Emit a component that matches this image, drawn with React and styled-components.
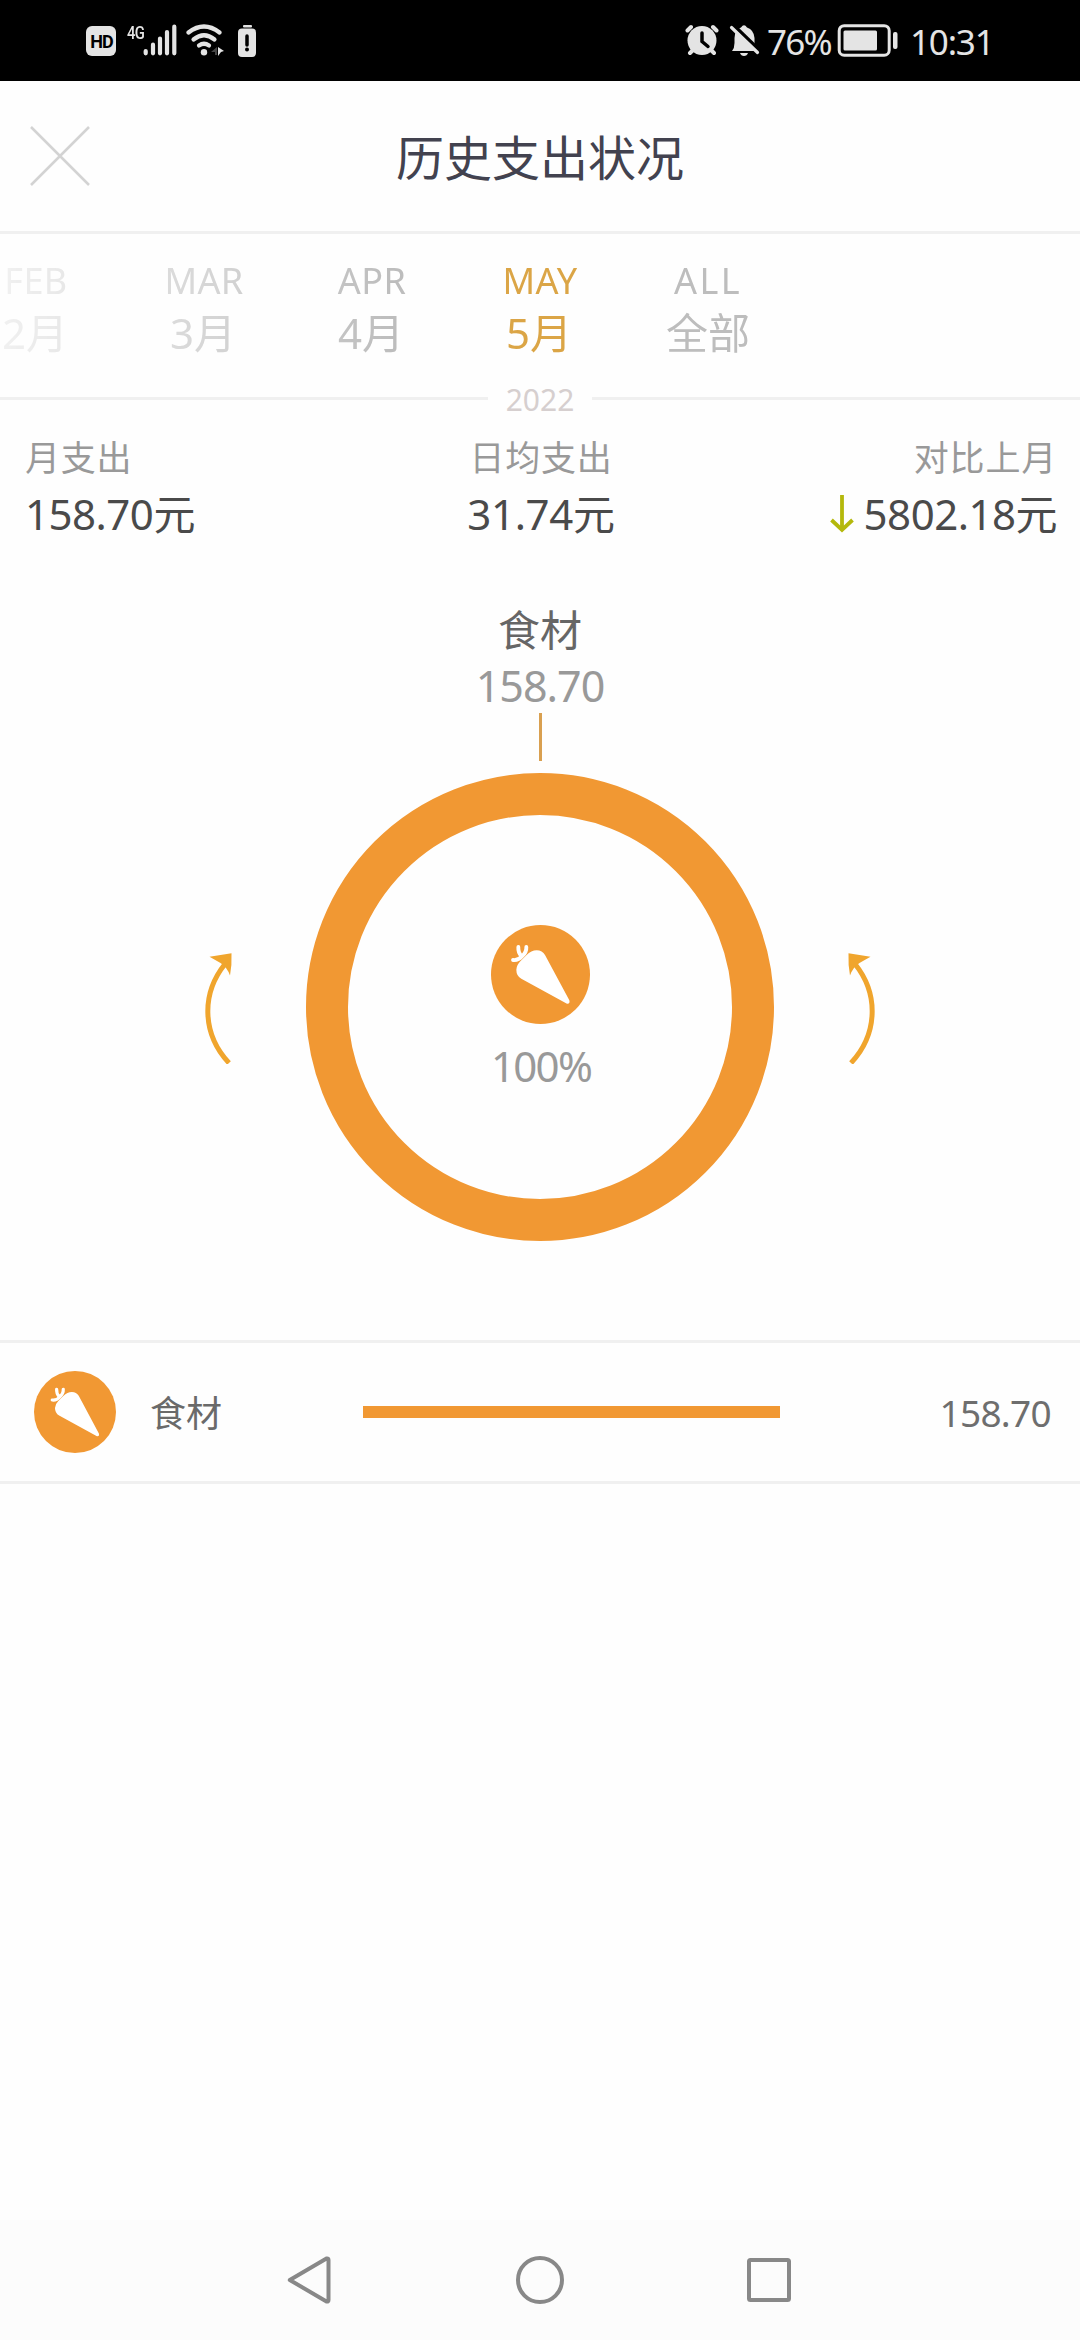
import React from "react";
import styled, { createGlobalStyle } from "styled-components";

const ORANGE = "#f19833";
const LINE = "#f0f0f0";

const GlobalStyle = createGlobalStyle`
  * { box-sizing: border-box; }
  body {
    margin: 0;
    background: #fefefe;
    font-family: "Noto Sans", "Noto Sans CJK SC", sans-serif;
  }
`;

const Screen = styled.div`
  display: flex;
  flex-direction: column;
  width: 1080px;
  height: 2340px;
  background: #fefefe;
  overflow: hidden;
`;

const Text = styled.span`
  display: block;
  height: ${(p) => p.$h}px;
  line-height: ${(p) => p.$h}px;
  font-size: ${(p) => p.$size}px;
  letter-spacing: ${(p) => p.$track || 0}px;
  color: ${(p) => p.$color};
  white-space: nowrap;
`;

/* ---------- status bar ---------- */

const StatusBar = styled.header`
  display: flex;
  justify-content: space-between;
  height: 81px;
  padding: 0 90px 0 86px;
  background: #000;
  color: #e4e4e4;
`;

const StatusGroup = styled.div`
  display: flex;
  align-items: flex-start;
  padding-top: 20px;
`;

const HdBadge = styled.span`
  width: 30px;
  height: 30px;
  margin-top: 6px;
  padding-left: 1px;
  border-radius: 6px;
  background: #e4e4e4;
  color: #000;
  font: 700 18px/32px "Roboto", sans-serif;
  letter-spacing: -1px;
  text-align: center;
`;

const Network = styled.span`
  width: 18px;
  margin: 3px 0 0 11px;
  font: 500 19px/19px "Roboto", sans-serif;
  letter-spacing: -1px;
  transform: scaleX(0.78);
  transform-origin: left;
`;

const StatusIcon = styled.svg`
  display: block;
  flex: none;
  margin-left: ${(p) => p.$gap || 0}px;
`;

const StatusText = styled.span`
  width: ${(p) => p.$w}px;
  margin-left: ${(p) => p.$gap}px;
  font-size: 35px;
  line-height: 43px;
  letter-spacing: ${(p) => p.$track}px;
  white-space: nowrap;
`;

/* ---------- title ---------- */

const TitleBar = styled.div`
  display: grid;
  grid-template-columns: 120px 1fr 120px;
  align-items: center;
  height: 153px;
  border-bottom: 3px solid ${LINE};
`;

const CloseButton = styled.button`
  display: flex;
  padding: 0 0 0 30px;
  border: 0;
  background: none;
`;

const Title = styled.h1`
  margin: 0;
  height: 70px;
  font-size: 48px;
  line-height: 73px;
  font-weight: 400;
  text-align: center;
  color: #42424f;
`;

/* ---------- month picker ---------- */

const Months = styled.nav`
  display: flex;
  height: 144px;
  margin-left: -48px;
  padding-top: 23px;
  mask-image: linear-gradient(to right, rgba(0, 0, 0, 0.2) 48px, #000 440px);
`;

const Month = styled.div`
  display: flex;
  flex-direction: column;
  align-items: center;
  width: 168px;
  flex: none;
  color: ${(p) => (p.$active ? "#dba546" : "#bdbdbd")};
`;

const MonthEn = styled.span`
  height: 46px;
  font-size: 36px;
  line-height: 47px;
  letter-spacing: ${(p) => (p.$wide ? 2.5 : 0.4)}px;
`;

const MonthCn = styled.span`
  height: 56px;
  font-size: 42px;
  line-height: 59px;
  margin-left: ${(p) => (p.$wide ? 0 : -2)}px;
`;

const YearRule = styled.div`
  display: flex;
  align-items: center;
  height: 41px;
  color: #d6cfcf;
  font-size: 30px;
  line-height: 43px;

  &::before,
  &::after {
    content: "";
    flex: 1;
    height: 3px;
    background: ${LINE};
  }
`;

const Year = styled.span`
  width: 104px;
  height: 41px;
  text-align: center;
`;

/* ---------- summary ---------- */

const Summary = styled.section`
  display: grid;
  grid-template-columns: 1fr 1fr 1fr;
  height: 161px;
  padding: 14px 23px 0 25px;
`;

const Stat = styled.div`
  display: flex;
  flex-direction: column;
  align-items: ${(p) => p.$align};
`;

const StatValue = styled.div`
  display: flex;
  align-items: center;
  gap: 10px;
`;

/* ---------- chart ---------- */

const Chart = styled.section`
  display: flex;
  flex-direction: column;
  align-items: center;
  height: 760px;
  padding-top: 22px;
`;

const Pointer = styled.div`
  width: 3px;
  height: 48px;
  margin-bottom: 12px;
  background: #d9a050;
`;

const Dial = styled.div`
  display: flex;
  align-items: center;
  gap: 73px;
`;

const Ring = styled.div`
  display: flex;
  flex-direction: column;
  align-items: center;
  width: 468px;
  height: 468px;
  padding-top: 110px;
  border: 42px solid ${ORANGE};
  border-radius: 50%;
`;

const Percent = styled(Text)`
  padding-left: 2px;
`;

const Arrow = styled.svg`
  display: block;
  transform: ${(p) => (p.$flip ? "scaleX(-1)" : "none")};
`;

/* ---------- list ---------- */

const Row = styled.div`
  display: grid;
  grid-template-columns: 150px 213px 417px 1fr;
  align-items: center;
  height: 144px;
  padding-right: 29px;
  border-top: 3px solid ${LINE};
  border-bottom: 3px solid ${LINE};
`;

const RowIcon = styled.div`
  padding-left: 34px;
`;

const RowName = styled(Text)`
  padding-top: 2px;
`;

const Bar = styled.div`
  height: 12px;
  background: ${ORANGE};
`;

const Amount = styled(Text)`
  justify-self: end;
  padding-top: 1px;
`;

/* ---------- system navigation ---------- */

const NavBar = styled.footer`
  display: flex;
  justify-content: center;
  align-items: center;
  gap: 181px;
  height: 120px;
  margin-top: auto;
  background: #fcfcfc;
`;

const NavIcon = styled.svg`
  display: block;
  width: 48px;
  height: 48px;
  fill: none;
  stroke: #888;
  stroke-width: 4;
  stroke-linejoin: round;
`;

const CarrotSvg = styled.svg`
  display: block;
`;

function Carrot({ size }) {
  return (
    <CarrotSvg width={size} height={size} viewBox="0 0 297 297">
      <circle cx="148.5" cy="148.5" r="148.5" fill={ORANGE} />
      <path
        d="M106 91 Q121 76 137 76 Q154 76 162 90 L235 226 Q238 237 228 236 L91 161 Q76 153 76 134 Q77 120 88 109 Z"
        fill="#fff"
      />
      <path
        d="M82 66 Q81 82 91 93 M106 66 Q107 82 93 94 Q82 107 66 105"
        fill="none"
        stroke="#fff"
        strokeWidth="11.5"
        strokeLinecap="round"
        strokeLinejoin="round"
      />
    </CarrotSvg>
  );
}

function SwipeArrow({ flip }) {
  return (
    <Arrow $flip={flip} width="30" height="114" viewBox="0 0 30 114">
      <path d="M26 113 C-1 84 -2 44 22 14" fill="none" stroke="#f0a52d" strokeWidth="5" />
      <path d="M28.500 3.300 L6.500 6.800 Q13 10.500 17.500 13 Q24 17 27 25.500 Q29 15 28.500 3.300 Z" fill="#f0a52d" />
    </Arrow>
  );
}

const MONTHS = [
  { en: "FEB", cn: "2月" },
  { en: "MAR", cn: "3月" },
  { en: "APR", cn: "4月" },
  { en: "MAY", cn: "5月", active: true },
  { en: "ALL", cn: "全部", wide: true },
];

export default function App() {
  return (
    <Screen>
      <GlobalStyle />
      <StatusBar>
        <StatusGroup>
          <HdBadge>HD</HdBadge>
          <Network>4G</Network>
          <StatusIcon $gap={-2} width="34" height="40" viewBox="143 20 34 40">
            <path
              d="M145.700 51V53.300M153 44.700V53.300M160 38.500V53.300M167 32V53.300M174.300 26.700V53.300"
              stroke="#e4e4e4"
              strokeWidth="4.200"
              strokeLinecap="round"
            />
          </StatusIcon>
          <StatusIcon $gap={8} width="40" height="40" viewBox="185 20 40 40">
            <g fill="none" stroke="#e4e4e4" strokeWidth="4.200" strokeLinecap="round">
              <path d="M188.500 32.500Q204 20.500 219.500 32.500" />
              <path d="M193.500 39.500Q204 31 214.500 39.500" />
              <path d="M199 45.500Q204 42 209 45.500" />
            </g>
            <circle cx="204" cy="52.300" r="3.200" fill="#e4e4e4" />
            <path d="M211 52L217 47V55H215V52Z" fill="#444" />
            <path d="M218 47L224 51L221 52L218 56Z" fill="#e4e4e4" />
          </StatusIcon>
          <StatusIcon $gap={12} width="20" height="40" viewBox="237 20 20 40">
            <rect x="243" y="25" width="9" height="2.500" rx="1" fill="#e4e4e4" />
            <rect x="238" y="28.500" width="18" height="28.500" rx="4" fill="#e4e4e4" />
            <path d="M247 36V45" stroke="#000" strokeWidth="3.500" strokeLinecap="round" />
            <circle cx="247" cy="49.500" r="2" fill="#000" />
          </StatusIcon>
        </StatusGroup>
        <StatusGroup>
          <StatusIcon width="34" height="40" viewBox="685 20 34 40">
            <circle cx="702" cy="40.500" r="14.500" fill="#e4e4e4" />
            <path
              d="M687.500 30.500L691 27M716.500 30.500L713 27M690 53L693 50M714 53L711 50"
              stroke="#e4e4e4"
              strokeWidth="4"
              strokeLinecap="round"
            />
            <path d="M702 33V41.500L708 46.500" fill="none" stroke="#000" strokeWidth="3.500" strokeLinecap="round" />
          </StatusIcon>
          <StatusIcon $gap={10} width="32" height="40" viewBox="729 20 32 40">
            <path
              d="M732 51Q734.500 48 734.500 43V38Q735 29 741 27.500Q744 23 747 27.500Q754 30 754.500 38V44L757 51Z"
              fill="#e4e4e4"
            />
            <path d="M740 53H748Q747 56 744 56Q741 56 740 53Z" fill="#e4e4e4" />
            <path d="M733 25L761 52" stroke="#000" strokeWidth="4" />
            <path d="M731.500 27.500L757.500 52.500" stroke="#e4e4e4" strokeWidth="3.200" strokeLinecap="round" />
          </StatusIcon>
          <StatusText $gap={6} $w={69} $track={-1.8}>76%</StatusText>
          <StatusIcon $gap={1} width="62" height="40" viewBox="837 20 62 40">
            <rect x="839.200" y="25.700" width="50" height="29.500" rx="5" fill="none" stroke="#e4e4e4" strokeWidth="3" />
            <rect x="843.500" y="30.500" width="33.500" height="20" rx="1.500" fill="#e4e4e4" />
            <rect x="893" y="32" width="4.500" height="17" rx="2" fill="#e4e4e4" />
          </StatusIcon>
          <StatusText $gap={11} $w={80} $track={-1.2}>10:31</StatusText>
        </StatusGroup>
      </StatusBar>

      <TitleBar>
        <CloseButton aria-label="关闭">
          <svg width="60" height="60" viewBox="0 0 60 60">
            <path d="M1 1L59 59M59 1L1 59" stroke="#d3d3d3" strokeWidth="2.500" />
          </svg>
        </CloseButton>
        <Title>历史支出状况</Title>
      </TitleBar>

      <Months>
        {MONTHS.map((m) => (
          <Month key={m.en} $active={m.active}>
            <MonthEn $wide={m.wide}>{m.en}</MonthEn>
            <MonthCn $wide={m.wide}>{m.cn}</MonthCn>
          </Month>
        ))}
      </Months>
      <YearRule>
        <Year>2022</Year>
      </YearRule>

      <Summary>
        <Stat $align="flex-start">
          <Text $h={50} $size={35} $track={0.8} $color="#999">月支出</Text>
          <Text $h={62} $size={42} $track={-0.5} $color="#4a4a4a">158.70元</Text>
        </Stat>
        <Stat $align="center">
          <Text $h={50} $size={35} $track={0.8} $color="#999">日均支出</Text>
          <Text $h={62} $size={42} $track={-0.3} $color="#4a4a4a">31.74元</Text>
        </Stat>
        <Stat $align="flex-end">
          <Text $h={50} $size={35} $track={0.8} $color="#999">对比上月</Text>
          <StatValue>
            <svg width="24" height="38" viewBox="0 0 24 38">
              <path d="M12 0V35M1.500 25L12 35L22.500 25" fill="none" stroke="#b4b80c" strokeWidth="3.800" />
            </svg>
            <Text $h={62} $size={42} $track={-0.5} $color="#4a4a4a">5802.18元</Text>
          </StatValue>
        </Stat>
      </Summary>

      <Chart>
        <Text $h={56} $size={42} $color="#666">食材</Text>
        <Text $h={55} $size={43} $track={-1} $color="#999">158.70</Text>
        <Pointer />
        <Dial>
          <SwipeArrow />
          <Ring>
            <Carrot size={99} />
            <Percent $h={84} $size={42} $track={-1.7} $color="#999">100%</Percent>
          </Ring>
          <SwipeArrow flip />
        </Dial>
      </Chart>

      <Row>
        <RowIcon>
          <Carrot size={82} />
        </RowIcon>
        <RowName $h={54} $size={36} $color="#6a6a6a">食材</RowName>
        <Bar />
        <Amount $h={52} $size={37} $track={-0.7} $color="#6e6e6e">158.70</Amount>
      </Row>

      <NavBar>
        <NavIcon viewBox="0 0 48 48">
          <path d="M2.800 24L39.500 2.500Q41.500 2 41.500 4V44Q41.500 46 39.500 45.500Z" />
        </NavIcon>
        <NavIcon viewBox="0 0 48 48">
          <circle cx="24" cy="24" r="22" />
        </NavIcon>
        <NavIcon viewBox="0 0 48 48">
          <rect x="4" y="4" width="40" height="40" rx="1.500" />
        </NavIcon>
      </NavBar>
    </Screen>
  );
}
